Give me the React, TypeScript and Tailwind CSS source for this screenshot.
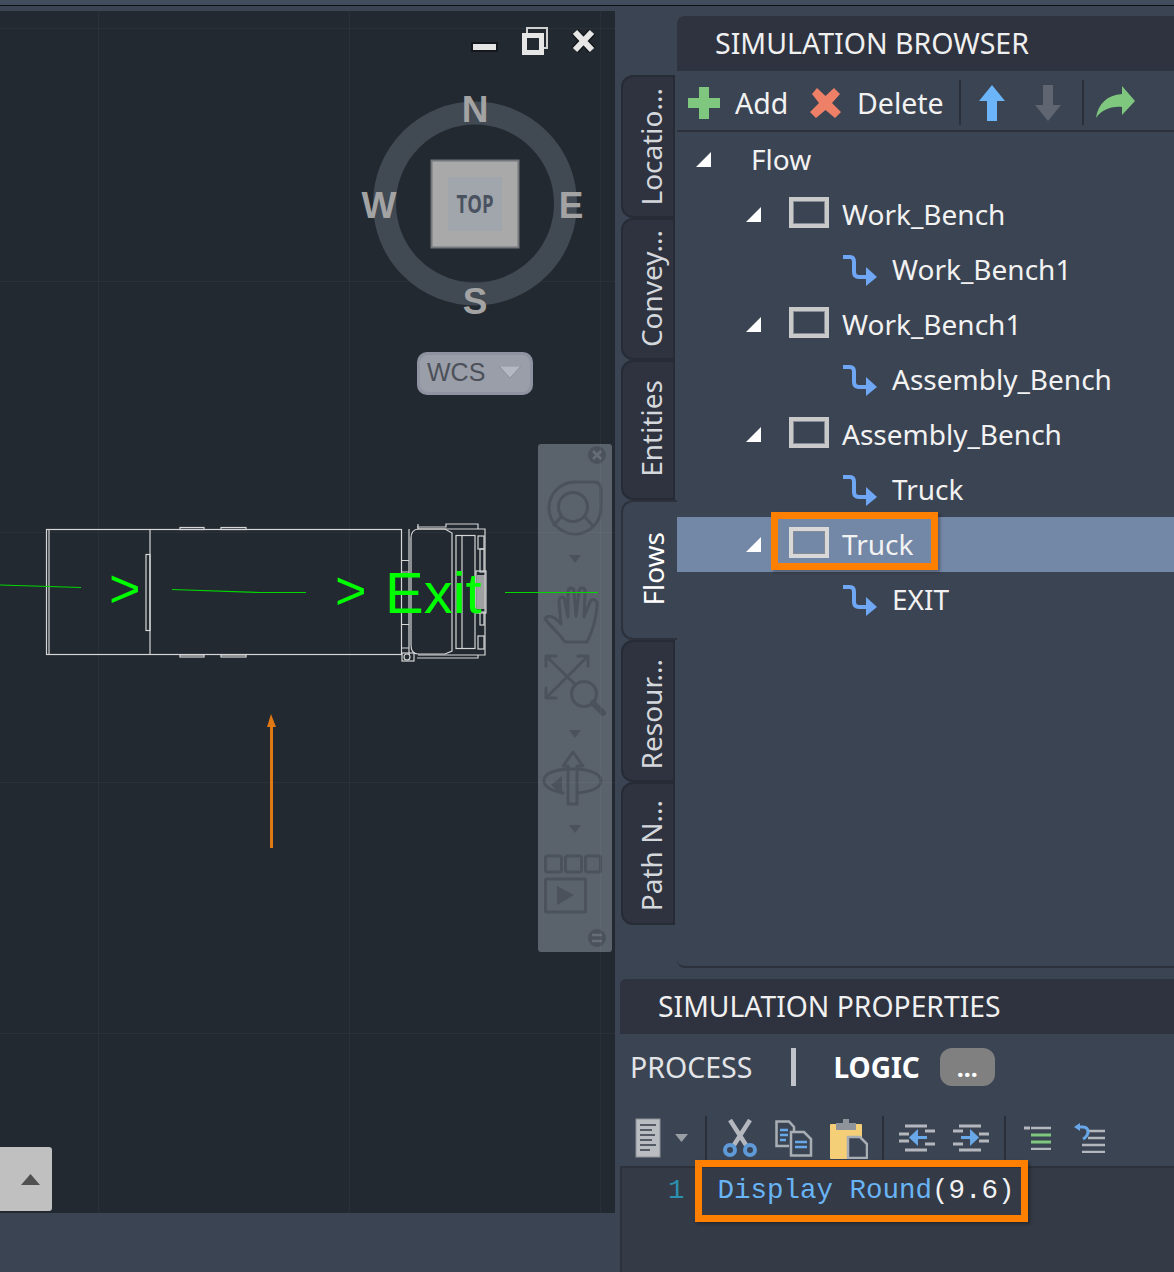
import React from "react";

const tabs = [
  { label: "Locatio...", cls: "h-[143px]" },
  { label: "Convey...", cls: "h-[142px]" },
  { label: "Entities", cls: "h-[140px] pb-[4px]" },
  { label: "Flows", cls: "h-[140px] pb-[2px]", active: true },
  { label: "Resour...", cls: "h-[142px] pt-[6px]" },
  { label: "Path N...", cls: "h-[143px] pt-[4px]" },
];

const treeRows = [
  { label: "Flow", kind: "root" },
  { label: "Work_Bench", kind: "node" },
  { label: "Work_Bench1", kind: "link" },
  { label: "Work_Bench1", kind: "node" },
  { label: "Assembly_Bench", kind: "link" },
  { label: "Assembly_Bench", kind: "node" },
  { label: "Truck", kind: "link" },
  { label: "Truck", kind: "node", selected: true },
  { label: "EXIT", kind: "link" },
];

const Tri = () => (
  <svg width="15" height="15" viewBox="0 0 15 15" className="shrink-0">
    <polygon points="15,0 15,15 0,15" fill="#fff" />
  </svg>
);

const BoxIcon = ({ selected }: { selected?: boolean }) => (
  <div className={`w-[40px] h-[31px] shrink-0 -translate-y-[2px] border-[4px] ${selected ? "border-[#d8d8d8]" : "border-[#c9c9c9]"}`}>
    <div className="w-full h-full border border-[#858b94]" />
  </div>
);

const RouteIcon = () => (
  <svg width="36" height="34" viewBox="0 0 36 34" className="shrink-0">
    <path d="M2,4 H9 Q13,4 13,9 V19 Q13,24 18,24 H30" fill="none" stroke="#6fa7f5" strokeWidth="4" />
    <polygon points="25,14 36,24 25,33" fill="#6fa7f5" />
  </svg>
);

const TreeRow = ({ row }: { row: any }) => {
  if (row.kind === "root") {
    return (
      <div className="h-[55px] flex items-center pl-[19px]">
        <Tri />
        <span className="ml-[40px] -translate-y-[1px]">{row.label}</span>
      </div>
    );
  }
  if (row.kind === "link") {
    return (
      <div className="h-[55px] flex items-center pl-[164px]">
        <RouteIcon />
        <span className="ml-[15px] -translate-y-[1px]">{row.label}</span>
      </div>
    );
  }
  return (
    <div className={`relative h-[55px] flex items-center pl-[69px] ${row.selected ? "bg-[#7387a7]" : ""}`}>
      <Tri />
      <div className="ml-[28px]"><BoxIcon selected={row.selected} /></div>
      <span className="ml-[13px] -translate-y-[1px]">{row.label}</span>
      {row.selected && (
        <div className="absolute left-[94px] top-[-5px] w-[167px] h-[58px] border-[7px] border-[#ff8000] shadow-[2px_2px_3px_rgba(0,0,0,0.3)]" />
      )}
    </div>
  );
};

const Divider = () => <div className="w-[2px] h-[45px] bg-[#2a2f39] shrink-0" />;

const Compass = () => (
  <svg className="absolute left-[350px] top-[70px] w-[250px] h-[250px]" viewBox="350 81 250 250">
    <circle cx="475" cy="203.500" r="90.500" fill="none" stroke="#414953" strokeWidth="23" />
    <rect x="431.500" y="160.500" width="87" height="87" fill="#a9a9a9" stroke="#74777b" strokeWidth="2" />
    <rect x="448" y="177" width="54" height="54" fill="#a0a6ab" />
    <g fontFamily="'Liberation Sans', sans-serif" fontWeight="700" fill="#a3a3a3" fontSize="37" textAnchor="middle">
      <text x="475" y="122">N</text>
      <text x="475" y="314">S</text>
      <text x="379" y="218">W</text>
      <text x="571" y="218">E</text>
    </g>
    <text x="475" y="213" textAnchor="middle" fontFamily="'Open Sans', sans-serif" fontWeight="700" fontSize="25" fill="#4a5260" textLength="37" lengthAdjust="spacingAndGlyphs">TOP</text>
  </svg>
);

const WindowButtons = () => (
  <svg className="absolute left-[465px] top-[11px] w-[140px] h-[40px]" viewBox="465 22 140 40">
    <rect x="472" y="43" width="25" height="8" fill="#e4e4e4" stroke="#14181d" strokeWidth="2" />
    <path d="M527,33 V28 H547 V48 H542" fill="none" stroke="#d0d0d0" strokeWidth="2" />
    <rect x="524.500" y="35.500" width="17" height="17" fill="none" stroke="#e6e6e6" strokeWidth="5" />
    <path d="M575,32 L592,50 M592,32 L575,50" stroke="#14181d" strokeWidth="9" />
    <path d="M575,32 L592,50 M592,32 L575,50" stroke="#e6e6e6" strokeWidth="6" />
  </svg>
);

const GridLines = () => (
  <svg className="absolute left-0 top-0 w-[615px] h-[1202px]" viewBox="0 11 615 1202">
    <g stroke="#ffffff" strokeOpacity="0.035" strokeWidth="1" fill="none">
      {[28, 281, 532, 782, 1033].map((y) => (
        <line key={y} x1="0" x2="615" y1={y + 0.5} y2={y + 0.5} />
      ))}
      {[98, 349, 600].map((x) => (
        <line key={x} y1="11" y2="1213" x1={x + 0.5} x2={x + 0.5} />
      ))}
    </g>
  </svg>
);

// drawing of the truck, route lines and arrow in page coordinates
const CadDrawing = () => (
  <svg className="absolute left-0 top-0 w-[615px] h-[1202px]" viewBox="0 11 615 1202">
    <g stroke="#d6d6d6" strokeWidth="1.200" fill="none">
      <rect x="46.500" y="529.500" width="355" height="125" />
      <line x1="49" x2="49" y1="530" y2="654" />
      <line x1="150" x2="150" y1="530" y2="654" />
      <rect x="146" y="554.500" width="4" height="76" />
      <rect x="180" y="527.500" width="24" height="2" />
      <rect x="221" y="527.500" width="25" height="2" />
      <rect x="180" y="655" width="24" height="2" />
      <rect x="221" y="655" width="25" height="2" />
      <path d="M401,560.500 H409 M401,624.500 H409 M401,572 H409 M401,648 H409 M409,529 V655" />
      <path d="M418,529 Q411,530 411,538 V645 Q411,654 418,654 H445 L452,651 V533 L445,529 Z" />
      <path d="M418,524 V529 H485 V655 H418 M417,527 H446 V524 H478 V529" />
      <path d="M417,658 H478 V655" />
      <rect x="456" y="535.500" width="19" height="113" />
      <line x1="462" x2="462" y1="536" y2="648" />
      <rect x="478" y="536" width="6" height="13" />
      <rect x="480" y="549" width="4" height="23" />
      <rect x="480" y="612" width="4" height="13" />
      <rect x="478" y="636" width="6" height="13" />
      <rect x="476" y="571" width="10" height="42" />
      <rect x="402" y="653" width="12" height="8" />
      <circle cx="407" cy="657" r="3" />
    </g>
    <rect x="477" y="575" width="8" height="34" fill="#c8c8c8" opacity="0.75" />
    <g stroke="#00d800" strokeWidth="1.200" fill="none">
      <path d="M0,585 L81,587.500" />
      <path d="M172,589.500 L260,592.500 H306" />
      <path d="M505,592.500 H598" />
    </g>
    <g fill="#00ff00" fontFamily="'Liberation Sans', sans-serif">
      <text x="109" y="607" fontSize="54">&gt;</text>
      <text x="335" y="609" fontSize="54">&gt;</text>
      <text x="385" y="613" fontSize="58">Exit</text>
    </g>
    <line x1="271.500" x2="271.500" y1="725" y2="848" stroke="#e07814" strokeWidth="3" />
    <polygon points="271,714 276,727 267,727" fill="#e07814" />
  </svg>
);

const NavBar = () => (
  <div className="absolute left-[538px] top-[433px] w-[74px] h-[508px] rounded-[3px] bg-[#5a626c]">
    <svg className="w-full h-full" viewBox="538 444 74 508">
      <g fill="none" stroke="#4b525c" strokeWidth="3" strokeLinejoin="round" strokeLinecap="round">
        <path d="M576,482 H594 Q601,482 601,490 V508 A26,26 0 1 1 576,482 Z" />
        <circle cx="573" cy="507" r="14.500" />
        <path d="M561,517 L554,525 M585,517 L592,525" />
        <path d="M565,642 C558,632 552,628 545,619 C548,614 554,616 561,624 L559,602 Q559,597 562,597 Q565,597 565,602 L568,617 L568,592 Q568,588 571,588 Q574,588 574,592 L576,616 L579,591 Q580,587 583,588 Q586,589 585,593 L584,617 L590,602 Q592,598 595,600 Q598,602 597,606 C596,620 592,632 587,642 Z" />
        <path d="M546,656 L590,699 M588,656 L546,698 M546,656 H556 M546,656 V666 M588,656 H578 M588,656 V666 M546,698 H556 M546,698 V688" />
        <circle cx="584" cy="694" r="12.500" fill="#5a626c" />
        <path d="M593,703 L603,713" strokeWidth="6" />
        <path d="M573,752 L583,766 H577 V804 H568 V766 H563 Z" />
        <path d="M563,793 C548,790 544,785 544,781 C544,772 558,769 573,769 C590,769 601,774 601,781 C601,788 590,792 577,793" />
        <rect x="545.500" y="856" width="16" height="16" rx="2" />
        <rect x="565.500" y="856" width="16" height="16" rx="2" />
        <rect x="585.500" y="856" width="15" height="16" rx="2" />
        <rect x="545.500" y="879" width="40" height="33" rx="1" />
      </g>
      <g fill="#4b525c">
        <polygon points="569,555 581,555 575,563" />
        <polygon points="569,730 581,730 575,738" />
        <polygon points="569,825 581,825 575,833" />
        <polygon points="557,886 557,905 574,895" />
        <polygon points="551,785 562,776 562,795" />
        <circle cx="597" cy="455" r="9" />
        <circle cx="597" cy="938" r="9" />
      </g>
      <path d="M593,451 L601,459 M601,451 L593,459" stroke="#666d76" strokeWidth="2.500" />
      <path d="M592,935 H602 M592,941 H602" stroke="#666d76" strokeWidth="2.500" />
    </svg>
  </div>
);

const Viewport = () => (
  <div className="relative mt-[5px] w-[615px] h-[1202px] bg-[#222931] shrink-0 overflow-hidden">
    <NavBar />
    <GridLines />
    <CadDrawing />
    <Compass />
    <WindowButtons />
    <div className="absolute left-[417px] top-[341px] w-[116px] h-[43px] rounded-[10px] bg-[#8f93a1] p-[3px]">
      <div className="w-full h-full rounded-[8px] bg-[#9a9ea9] flex items-center pl-[7px] pb-[2px] font-['Liberation_Sans',sans-serif] text-[25px] text-[#4c5159]">
        WCS
        <svg width="22" height="13" viewBox="0 0 22 13" className="ml-[14px]">
          <polygon points="0,0 22,0 11,12" fill="#b4b8c2" stroke="#8d919d" />
        </svg>
      </div>
    </div>
    <div className="absolute left-0 top-[1136px] w-[52px] h-[64px] bg-[#c0c0c0] rounded-r-[3px] flex items-center justify-end pr-[12px]">
      <svg width="19" height="11" viewBox="0 0 19 11"><polygon points="9.500,0 19,11 0,11" fill="#505050" /></svg>
    </div>
  </div>
);

const BrowserToolbar = () => (
  <div className="h-[61px] flex items-center border-b-[2px] border-[#2c313b] pt-[4px] pl-[11px] text-[28.500px] text-[#f2f2f2]">
    <svg width="32" height="32" viewBox="0 0 32 32" className="shrink-0">
      <path d="M11,0 H21 V11 H32 V21 H21 V32 H11 V21 H0 V11 H11 Z" fill="#7fc77f" />
    </svg>
    <span className="ml-[15px] w-[74px] translate-y-[1px]">Add</span>
    <svg width="33" height="32" viewBox="0 0 33 32" className="shrink-0">
      <path d="M3,7 L8,1 L16.500,9 L25,1 L31,7 L23,16 L32,25 L26,31 L16.500,23 L7,31 L1,25 L10,16 Z" fill="#ef8068" />
    </svg>
    <span className="ml-[15px] w-[102px] translate-y-[1px]">Delete</span>
    <Divider />
    <svg width="28" height="36" viewBox="0 0 28 36" className="ml-[17px] shrink-0">
      <path d="M14,0 L27,16 H19 V36 H9 V16 H1 Z" fill="#6cb5f9" />
    </svg>
    <svg width="28" height="36" viewBox="0 0 28 36" className="ml-[28px] shrink-0">
      <path d="M9,0 H19 V20 H27 L14,36 L1,20 H9 Z" fill="#5f6672" />
    </svg>
    <div className="ml-[20px]"><Divider /></div>
    <svg width="41" height="33" viewBox="0 0 41 33" className="ml-[11px] shrink-0">
      <path d="M27,0 L40,15 L27,29 V21 C15,20 7,24 1,32 C3,18 12,9 27,8 Z" fill="#7fc77f" />
    </svg>
  </div>
);

const CodeToolbar = () => (
  <div className="h-[52px] mt-[5px] flex items-center pl-[15px]">
    <svg width="26" height="40" viewBox="0 0 26 40" className="shrink-0">
      <rect x="1" y="1" width="24" height="38" fill="#b9bcc0" stroke="#8f9398" />
      <path d="M5,7 H21 M5,12 H17 M5,17 H20 M5,22 H17 M5,27 H21 M5,32 H15" stroke="#555b64" strokeWidth="2" />
    </svg>
    <svg width="13" height="8" viewBox="0 0 13 8" className="ml-[14px] shrink-0"><polygon points="0,0 13,0 6.500,8" fill="#9a9fa6" /></svg>
    <div className="ml-[17px] w-[2px] h-[44px] bg-[#2a2f39]" />
    <svg width="36" height="38" viewBox="0 0 36 38" className="ml-[15px] shrink-0">
      <path d="M8,1 L24,26 M28,1 L12,26" stroke="#b4b8be" strokeWidth="4.500" />
      <circle cx="8" cy="31" r="5" fill="none" stroke="#5f9ad8" strokeWidth="4" />
      <circle cx="28" cy="31" r="5" fill="none" stroke="#5f9ad8" strokeWidth="4" />
    </svg>
    <svg width="38" height="37" viewBox="0 0 38 37" className="ml-[17px] shrink-0">
      <path d="M14,26 H1.500 V1.500 H14 L19,7 V11" fill="none" stroke="#a9aeb5" strokeWidth="2.500" />
      <path d="M16,12 H29 L36,19 V35.500 H16 Z" fill="#3b4453" stroke="#a9aeb5" strokeWidth="2.500" />
      <path d="M5,10 H13 M5,15 H13 M5,20 H11 M20,22 H32 M20,27 H32" stroke="#68a8e8" strokeWidth="2.500" />
    </svg>
    <svg width="38" height="41" viewBox="0 0 38 41" className="ml-[17px] shrink-0">
      <rect x="0" y="6" width="32" height="35" rx="1" fill="#f5cf78" />
      <path d="M6,5 H13 V1 H19 V5 H26 V12 H6 Z" fill="#8f949b" />
      <path d="M18,19 H30 L37,26 V40 H18 Z" fill="#3b4453" stroke="#a9aeb5" strokeWidth="2.500" />
    </svg>
    <div className="ml-[14px] w-[2px] h-[44px] bg-[#2a2f39]" />
    <svg width="36" height="28" viewBox="0 0 36 28" className="ml-[15px] shrink-0">
      <path d="M6,2 H28 M0,10 H10 M0,17 H10 M6,26 H28 M26,7 H36 M26,20 H36" stroke="#b4b8be" strokeWidth="3" />
      <path d="M28,13.500 H14" stroke="#68a8e8" strokeWidth="3" />
      <polygon points="19,5 19,22 10,13.500" fill="#68a8e8" />
    </svg>
    <svg width="36" height="28" viewBox="0 0 36 28" className="ml-[18px] shrink-0">
      <path d="M6,2 H28 M26,10 H36 M26,17 H36 M6,26 H28 M0,7 H10 M0,20 H10" stroke="#b4b8be" strokeWidth="3" />
      <path d="M8,13.500 H20" stroke="#68a8e8" strokeWidth="3" />
      <polygon points="17,5 17,22 26,13.500" fill="#68a8e8" />
    </svg>
    <div className="ml-[15px] w-[2px] h-[44px] bg-[#2a2f39]" />
    <svg width="28" height="24" viewBox="0 0 28 24" className="ml-[18px] shrink-0">
      <path d="M0,2 H6" stroke="#b4b8be" strokeWidth="3" />
      <path d="M7,2 H27 M7,23 H27" stroke="#b4b8be" strokeWidth="2.500" />
      <path d="M7,9 H27 M7,16 H27" stroke="#7fc77f" strokeWidth="3" />
    </svg>
    <svg width="32" height="30" viewBox="0 0 32 30" className="ml-[22px] shrink-0">
      <path d="M14,8 H31 M14,15 H31 M8,22 H31 M8,29 H31" stroke="#b4b8be" strokeWidth="2.500" />
      <path d="M4,4 H9 Q14,4 14,9 Q14,13 9,16" fill="none" stroke="#68a8e8" strokeWidth="3" />
      <polygon points="0,4 6,0 6,8" fill="#68a8e8" />
    </svg>
  </div>
);

export default function App() {
  return (
    <div className="w-[1174px] h-[1272px] overflow-hidden bg-[#3b4453] font-['Noto_Sans',sans-serif] text-[#f2f2f2]">
      <div className="h-[6px] bg-[#414c5c] border-b border-[#0c0f14]" />
      <div className="flex">
        <Viewport />
        <div className="w-[559px] flex flex-col">
          {/* simulation browser */}
          <div className="mt-[10px] ml-[62px] h-[55px] rounded-tl-[8px] bg-[#2e333f] pl-[38px] flex items-center text-[28.500px] text-[#f0f0f0]">
            SIMULATION BROWSER
          </div>
          <div className="flex h-[897px]">
            <div className="ml-[6px] w-[56px] pt-[4px] flex flex-col shrink-0">
              {tabs.map((t) => (
                <div
                  key={t.label}
                  className={`${t.cls} rounded-l-[12px] flex items-center justify-center ${
                    t.active
                      ? "w-[56px] bg-[#3b4453] text-white border-t-2 border-b-2 border-l-2 border-[#2c313b] border-r-0"
                      : "w-[54px] bg-[#2e333f] text-[#d4d7dc] border-2 border-[#262b35]"
                  }`}
                >
                  <span className="ml-[5px] [writing-mode:vertical-rl] rotate-180 text-[28px] leading-[1]">{t.label}</span>
                </div>
              ))}
            </div>
            <div className="flex-1 border-b-2 border-[#2c313b] rounded-bl-[8px] text-[28px]">
              <BrowserToolbar />
              <div>
                {treeRows.map((row, i) => (
                  <TreeRow key={i} row={row} />
                ))}
              </div>
            </div>
          </div>

          {/* simulation properties */}
          <div className="mt-[11px] ml-[5px] flex-1 flex flex-col">
            <div className="h-[55px] rounded-tl-[6px] bg-[#2e333f] pl-[38px] flex items-center text-[28.300px] text-[#f0f0f0]">
              SIMULATION PROPERTIES
            </div>
            <div className="h-[38px] mt-[14px] pl-[10px] flex items-start">
              <span className="text-[28.500px] leading-[38px] text-[#e2e4e7]">PROCESS</span>
              <div className="ml-[39px] w-[5px] h-[38px] bg-[#c0c4ca]" />
              <span className="ml-[37px] text-[28px] leading-[38px] font-bold text-white">LOGIC</span>
              <div className="ml-[20px] w-[55px] h-[38px] rounded-[12px] bg-[#808080] flex items-center justify-center text-[25px] font-bold leading-[38px] text-white">
                ...
              </div>
            </div>
            <div className="mt-[21px]"><CodeToolbar /></div>
            <div className="relative mt-[2px] h-[200px] bg-[#343a46] border-t-2 border-l-2 border-[#2c313b] font-['Liberation_Mono',monospace] text-[27.500px]">
              <div className="flex pt-[5px] leading-[36px]">
                <span className="ml-[46px] text-[#2b91af]">1</span>
                <span className="ml-[33px] text-[#69b4f5]">Display Round<span className="text-[#f2f2f2]">(9.6)</span></span>
              </div>
              <div className="absolute left-[73px] top-[-8px] w-[333px] h-[62px] border-[7px] border-[#ff8000] shadow-[2px_2px_3px_rgba(0,0,0,0.3)]" />
            </div>
          </div>
        </div>
      </div>
    </div>
  );
}
